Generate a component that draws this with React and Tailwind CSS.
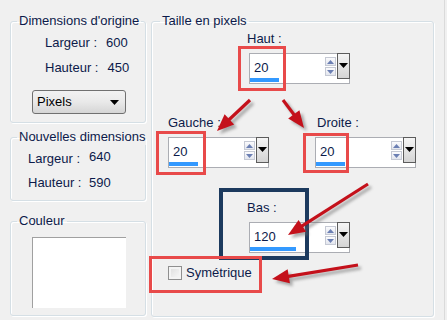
import React from "react";

const FONT = { fontFamily: '"Liberation Sans", Arial, sans-serif' };

function Group({ title, className = "", legendClass = "ml-[6px]", children }) {
  return (
    <fieldset
      className={
        "min-w-0 border border-[#d5dfe5] rounded-[3px] shadow-[inset_1px_1px_0_#ffffff,1px_1px_0_#ffffff] " +
        className
      }
    >
      <legend className={"px-[2px] whitespace-nowrap text-[13px] leading-[16px] text-[#0c1a4a] " + legendClass}>
        {title}
      </legend>
      {children}
    </fieldset>
  );
}

function Spin({ value, bar }) {
  return (
    <div className="flex w-[101px] h-[31px] border border-[#abadb3] bg-white">
      <div className="flex flex-col flex-1 pt-[6px]">
        <span className="pl-[4px] text-[13px] leading-[16px] text-[#0c1a4a]">{value}</span>
        <div className="mt-auto mb-[1px] h-[4px] bg-[#3399ff]" style={{ width: bar }} />
      </div>
      <div className="flex flex-col gap-[1px] mt-[3px] mr-[1px]">
        <div className="w-[11px] h-[9px] border border-[#c5c9d4] bg-gradient-to-b from-[#fbfbfd] to-[#e3e6ee] flex items-center justify-center">
          <svg width="7" height="4" viewBox="0 0 7 4">
            <polygon points="0,4 7,4 3.5,0" fill="#6b7fb3" />
          </svg>
        </div>
        <div className="w-[11px] h-[9px] border border-[#c5c9d4] bg-gradient-to-b from-[#fbfbfd] to-[#e3e6ee] flex items-center justify-center">
          <svg width="7" height="4" viewBox="0 0 7 4">
            <polygon points="0,0 7,0 3.5,4" fill="#6b7fb3" />
          </svg>
        </div>
      </div>
      <div className="w-[13px] h-[26px] -mt-[1px] -mr-[1px] border border-[#5c5c5c] bg-gradient-to-b from-[#f5f5f5] to-[#d4d4d4] flex justify-center pt-[9px]">
        <svg width="9" height="5" viewBox="0 0 9 5">
          <polygon points="0,0 9,0 4.5,5" fill="#000" />
        </svg>
      </div>
    </div>
  );
}

function Arrow({ x1, y1, x2, y2, shadow }) {
  const dx = x2 - x1;
  const dy = y2 - y1;
  const len = Math.hypot(dx, dy);
  const ux = dx / len;
  const uy = dy / len;
  const hl = 17;
  const hw = 7;
  const bx = x2 - ux * hl;
  const by = y2 - uy * hl;
  const p1 = `${bx - uy * hw},${by + ux * hw}`;
  const p2 = `${bx + uy * hw},${by - ux * hw}`;
  const color = shadow ? "#6b6b6b" : "#c4111b";
  return (
    <g>
      <line x1={x1} y1={y1} x2={bx + ux * 2} y2={by + uy * 2} stroke={color} strokeWidth="3.2" />
      <polygon points={`${x2},${y2} ${p1} ${p2}`} fill={color} />
    </g>
  );
}

const ARROWS = [
  { x1: 250, y1: 100, x2: 217, y2: 131 },
  { x1: 283, y1: 100, x2: 304, y2: 128 },
  { x1: 368, y1: 184, x2: 288, y2: 235 },
  { x1: 358, y1: 265, x2: 272, y2: 279 },
];

export default function App() {
  return (
    <div
      className="relative w-[447px] h-[320px] bg-[#f0f0f0] overflow-hidden flex pl-[10px] pt-[13px] text-[#0c1a4a]"
      style={FONT}
    >
      {/* left column */}
      <div className="flex flex-col w-[136px]">
        <Group title="Dimensions d'origine" className="h-[110px]">
          <div className="flex flex-col pl-[34px] pt-[6px] text-[13px] leading-[16px]">
            <div className="flex gap-[9px]">
              <span>Largeur :</span>
              <span>600</span>
            </div>
            <div className="flex gap-[9px] mt-[9px]">
              <span>Hauteur :</span>
              <span>450</span>
            </div>
          </div>
          <div className="ml-[21px] mt-[14px] w-[94px] h-[24px] rounded-[3px] border border-[#707070] bg-gradient-to-b from-[#f2f2f2] via-[#e9e9e9] to-[#d5d5d5] flex items-center pl-[4px] pr-[6px] text-[13px] text-[#000]">
            <span className="flex-1">Pixels</span>
            <svg width="9" height="5" viewBox="0 0 9 5">
              <polygon points="0,0 9,0 4.5,5" fill="#000" />
            </svg>
          </div>
        </Group>

        <Group title="Nouvelles dimensions" className="h-[72px] mt-[6px]">
          <div className="flex flex-col pl-[17px] pt-[6px] text-[13px] leading-[16px]">
            <div className="flex">
              <span className="w-[61px]">Largeur :</span>
              <span className="-mt-[2px]">640</span>
            </div>
            <div className="flex mt-[8px]">
              <span className="w-[61px]">Hauteur :</span>
              <span>590</span>
            </div>
          </div>
        </Group>

        <Group title="Couleur" className="h-[103px] mt-[12px]">
          <div className="ml-[21px] mt-[8px] w-[94px] h-[71px] bg-white border-l border-t border-[#a0a0a0]" />
        </Group>
      </div>

      {/* right group */}
      <Group title="Taille en pixels" className="ml-[5px] w-[283px] h-[304px]" legendClass="ml-[8px]">
        <div className="flex flex-col pt-[2px] text-[13px] leading-[16px]">
          <div className="flex flex-col ml-[97px]">
            <span className="-ml-[2px]">Haut :</span>
            <div className="mt-[6px]">
              <Spin value="20" bar={29} />
            </div>
          </div>

          <div className="flex mt-[31px] ml-[16px] gap-[46px]">
            <div className="flex flex-col">
              <span>Gauche :</span>
              <div className="mt-[6px]">
                <Spin value="20" bar={29} />
              </div>
            </div>
            <div className="flex flex-col">
              <span className="ml-[2px]">Droite :</span>
              <div className="mt-[6px]">
                <Spin value="20" bar={29} />
              </div>
            </div>
          </div>

          <div className="flex flex-col ml-[97px] mt-[32px]">
            <span className="-ml-[2px]">Bas :</span>
            <div className="mt-[6px]">
              <Spin value="120" bar={46} />
            </div>
          </div>

          <div className="flex items-center ml-[16px] mt-[12px] gap-[4px]">
            <div className="w-[14px] h-[14px] border border-[#8f8f8f] bg-gradient-to-br from-[#dcdcdc] to-[#fbfbfb] shadow-[inset_0_0_0_2px_#f4f4f4]" />
            <span>Symétrique</span>
          </div>
        </div>
      </Group>

      {/* right window edge */}
      <div className="absolute top-0 right-[2px] w-[1px] h-full bg-[#dadada]" />

      {/* annotation boxes */}
      <div className="absolute left-[238px] top-[46px] w-[48px] h-[45px] border-[3px] border-[#e84a4a]" />
      <div className="absolute left-[156px] top-[131px] w-[50px] h-[44px] border-[3px] border-[#e84a4a]" />
      <div className="absolute left-[303px] top-[133px] w-[46px] h-[40px] border-[3px] border-[#e84a4a]" />
      <div className="absolute left-[219px] top-[188px] w-[90px] h-[72px] border-[4px] border-[#1c3a5e]" />
      <div className="absolute left-[149px] top-[256px] w-[113px] h-[37px] border-[3px] border-[#e84a4a]" />

      {/* arrows */}
      <svg className="absolute inset-0 pointer-events-none" width="447" height="320">
        <defs>
          <filter id="blur" x="-20%" y="-20%" width="140%" height="140%">
            <feGaussianBlur stdDeviation="1.6" />
          </filter>
        </defs>
        <g filter="url(#blur)" opacity="0.55" transform="translate(3,3)">
          {ARROWS.map((a, i) => (
            <Arrow key={i} {...a} shadow />
          ))}
        </g>
        {ARROWS.map((a, i) => (
          <Arrow key={i} {...a} />
        ))}
      </svg>
    </div>
  );
}
